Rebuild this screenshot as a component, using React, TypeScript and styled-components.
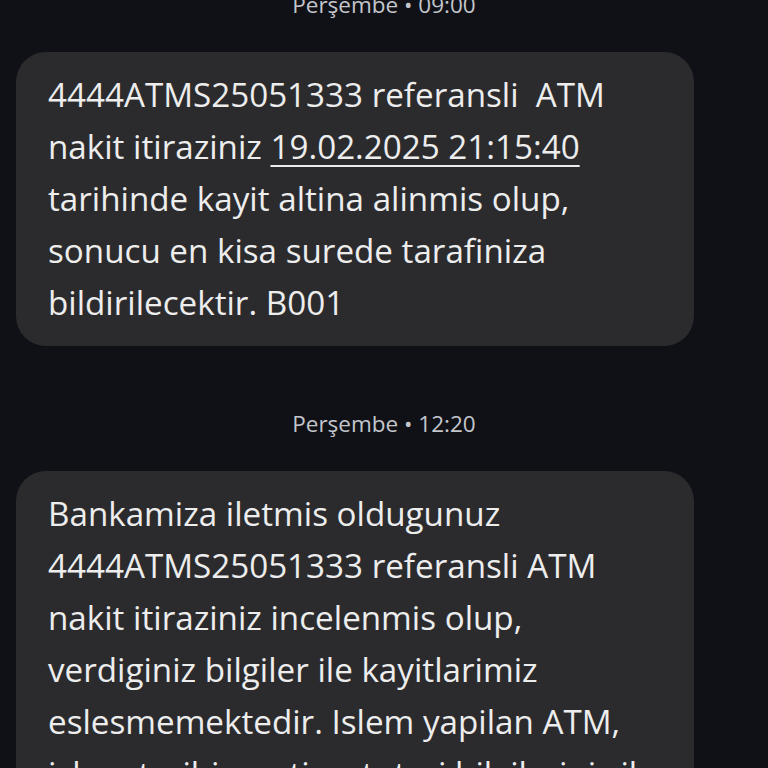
import React from 'react';
import styled, { createGlobalStyle } from 'styled-components';

const GlobalStyle = createGlobalStyle`
	html, body {
		margin: 0;
		padding: 0;
		background-color: #0f1117;
		overflow: hidden;
	}
	body {
		font-family: "Open Sans", Roboto, "Noto Sans", "Liberation Sans", sans-serif;
		-webkit-font-smoothing: antialiased;
	}
`;

const Screen = styled.div`
	width: 768px;
	height: 768px;
	overflow: hidden;
	background-color: #0f1117;
`;
const Thread = styled.div`
	display: flex;
	flex-direction: column;
	gap: 64px;
	margin-top: -9px;
	padding: 0 74px 0 16px;
`;
const Group = styled.div`
	display: flex;
	flex-direction: column;
	gap: 33px;
`;
// 타임스탬프는 화면 가운데 정렬 (말풍선 영역이 왼쪽으로 치우쳐 있음)
const Stamp = styled.div`
	text-align: center;
	font-size: 22.5px;
	line-height: 28px;
	color: #c4c6cc;
	padding-left: 58px;
`;
const Bubble = styled.div`
	background-color: #2b2b2e;
	border-radius: 30px;
	padding: 17px 32px 17px;
	color: #ededed;
	font-size: 33.2px;
	line-height: 52px;
`;
const Line = styled.div`
	white-space: pre;
`;
const DateLink = styled.span`
	text-decoration: underline;
	text-decoration-thickness: 2px;
	text-underline-offset: 6px;
`;

type Message = {
	time: string;
	lines: React.ReactNode[];
};

const messages: Message[] = [
	{
		time: 'Perşembe • 09:00',
		lines: [
			'4444ATMS25051333 referansli  ATM',
			<>nakit itiraziniz <DateLink>19.02.2025 21:15:40</DateLink></>,
			'tarihinde kayit altina alinmis olup,',
			'sonucu en kisa surede tarafiniza',
			'bildirilecektir. B001',
		],
	},
	{
		time: 'Perşembe • 12:20',
		lines: [
			'Bankamiza iletmis oldugunuz',
			'4444ATMS25051333 referansli ATM',
			'nakit itiraziniz incelenmis olup,',
			'verdiginiz bilgiler ile kayitlarimiz',
			'eslesmemektedir. Islem yapilan ATM,',
			'islem tarihi, saati ve tutari bilgileriniz ile',
		],
	},
];

const App = () => {
	return (
		<>
			<GlobalStyle />
			<Screen>
				<Thread>
					{messages.map((msg) => (
						<Group key={msg.time}>
							<Stamp>{msg.time}</Stamp>
							<Bubble>
								{msg.lines.map((line, i) => (
									<Line key={i}>{line}</Line>
								))}
							</Bubble>
						</Group>
					))}
				</Thread>
			</Screen>
		</>
	);
};

export default App;
